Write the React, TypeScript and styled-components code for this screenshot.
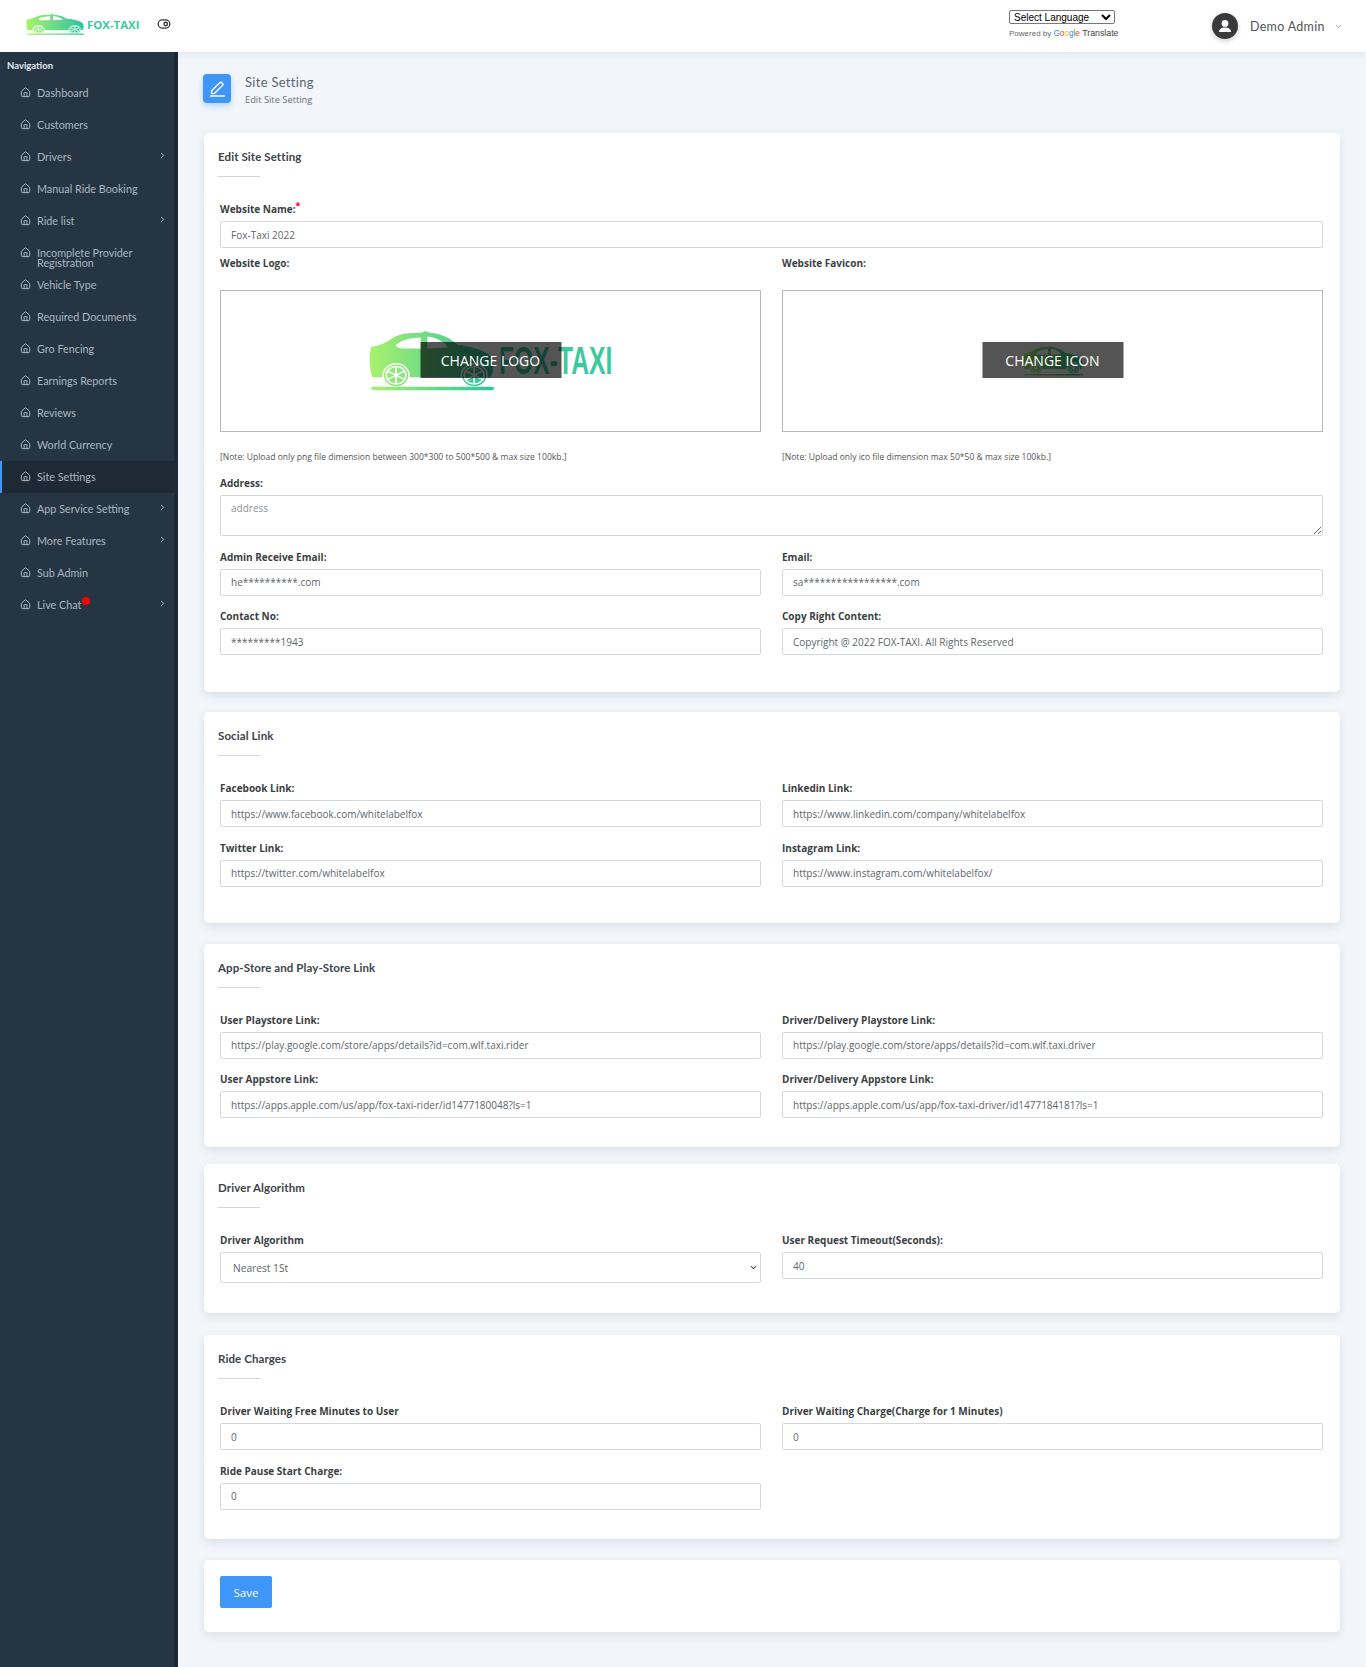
import React from 'react'
import styled, { createGlobalStyle } from 'styled-components'
import { ChevronDown, ChevronRight, House, ToggleRight } from 'lucide-react'

const GlobalStyle = createGlobalStyle`
  * { box-sizing: border-box; }
  html, body { margin: 0; padding: 0; }
  body { font-family: 'Open Sans', sans-serif; background: #f2f6fa; }
`

const NAV_ITEMS = [
  { label: 'Dashboard' },
  { label: 'Customers' },
  { label: 'Drivers', more: true },
  { label: 'Manual Ride Booking' },
  { label: 'Ride list', more: true },
  { label: 'Incomplete Provider Registration', twoLines: true },
  { label: 'Vehicle Type' },
  { label: 'Required Documents' },
  { label: 'Gro Fencing' },
  { label: 'Earnings Reports' },
  { label: 'Reviews' },
  { label: 'World Currency' },
  { label: 'Site Settings', active: true },
  { label: 'App Service Setting', more: true },
  { label: 'More Features', more: true },
  { label: 'Sub Admin' },
  { label: 'Live Chat', more: true, dot: true },
]

function Wheel({ id, cx }: { id: string; cx: number }) {
  return (
    <g>
      <circle cx={cx} cy="48" r="12.5" fill={`url(#${id})`} stroke="#fff" strokeWidth="1.5" />
      <circle cx={cx} cy="48" r="9.5" fill="none" stroke="#fff" strokeWidth="1.6" />
      <path
        d={`M${cx} 39 V57 M${cx - 8} 43.5 L${cx + 8} 52.5 M${cx - 8} 52.5 L${cx + 8} 43.5`}
        fill="none"
        stroke="#fff"
        strokeWidth="1.6"
      />
    </g>
  )
}

function CarLogo({ id, width, height }: { id: string; width: number; height: number }) {
  return (
    <svg width={width} height={height} viewBox="0 0 120 65" preserveAspectRatio="none" aria-hidden="true">
      <defs>
        <linearGradient id={id} gradientUnits="userSpaceOnUse" x1="0" y1="0" x2="120" y2="0">
          <stop offset="0" stopColor="#a9f26c" />
          <stop offset="1" stopColor="#2cc2a2" />
        </linearGradient>
      </defs>
      <path
        fill={`url(#${id})`}
        d="M2 17 C10 16 16 13 22 8 C29 3 38 2 50 2 L54 0 L58 2 C70 3 78 8 85 15 C98 17 112 21 117 28 C120 33 120 42 117 50 L3 50 C0 36 0 26 2 17 Z"
      />
      <path fill="#fff" d="M26 15 C31 10 40 7 50 7 L50 19 L32 19 C28 19 26 17 26 15 Z" />
      <path fill="#fff" d="M56 6 C65 7 71 11 76 18 L56 19 Z" />
      <Wheel id={id} cx={26} />
      <Wheel id={id} cx={101} />
      <rect x="2" y="60.5" width="118" height="3.6" rx="1.8" fill={`url(#${id})`} />
    </svg>
  )
}

function Avatar() {
  return (
    <AvatarCircle>
      <svg width="14" height="14" viewBox="0 0 14 14" aria-hidden="true">
        <circle cx="7" cy="4.4" r="3.4" fill="#fff" />
        <path d="M1 13 C1 9.6 4 8.4 7 8.4 C10 8.4 13 9.6 13 13 Z" fill="#fff" />
      </svg>
    </AvatarCircle>
  )
}

function EditIcon() {
  return (
    <svg width="15" height="16" viewBox="0 0 15 16" fill="none" stroke="#fff" strokeWidth="1.4" aria-hidden="true">
      <path d="M1.6 9.8 L9.4 2 C10.2 1.2 11.4 1.2 12.2 2 C13 2.8 13 4 12.2 4.8 L4.4 12.6 H1.6 Z" strokeLinejoin="round" />
      <path d="M0.5 15 H14.5" strokeLinecap="round" />
    </svg>
  )
}

function TextField({ label, value }: { label: string; value: string }) {
  return (
    <Field>
      <Label>{label}</Label>
      <Input readOnly defaultValue={value} />
    </Field>
  )
}

function Card(props: { title: string; bottom?: number; gap?: number; children: React.ReactNode }) {
  const { title, bottom = 24, gap = 20.5, children } = props
  return (
    <Panel $bottom={bottom} $gap={gap}>
      <PanelTitle>{title}</PanelTitle>
      <TitleRule />
      {children}
    </Panel>
  )
}

export default function App() {
  return (
    <Shell>
      <GlobalStyle />
      <Header>
        <Brand>
          <CarLogo id="brand-car" width={58} height={21} />
          <BrandName>FOX-TAXI</BrandName>
        </Brand>
        <ThemeToggle size={14} color="#333" strokeWidth={2.2} />
        <Translate>
          <LanguageSelect defaultValue="">
            <option value="">Select Language</option>
          </LanguageSelect>
          <Powered>
            Powered by <GoogleWord>
              <span style={{ color: '#4285f4' }}>G</span>
              <span style={{ color: '#ea4335' }}>o</span>
              <span style={{ color: '#fbbc05' }}>o</span>
              <span style={{ color: '#4285f4' }}>g</span>
              <span style={{ color: '#34a853' }}>l</span>
              <span style={{ color: '#ea4335' }}>e</span>
            </GoogleWord> <TranslateWord>Translate</TranslateWord>
          </Powered>
        </Translate>
        <UserMenu>
          <Avatar />
          <UserName>Demo Admin</UserName>
          <ChevronDown size={9} color="#888" strokeWidth={2} />
        </UserMenu>
      </Header>
      <Body>
        <Sidebar>
          <NavHeading>Navigation</NavHeading>
          {NAV_ITEMS.map(item => (
            <NavItem key={item.label} $active={item.active}>
              <NavIcon><House size={11} strokeWidth={2} color="#b4c0cc" /></NavIcon>
              <NavLabel $twoLines={item.twoLines}>
                {item.label}
                {item.dot && <RedDot />}
              </NavLabel>
              {item.more && <NavMore><ChevronRight size={9} strokeWidth={2.4} color="#b4c0cc" /></NavMore>}
            </NavItem>
          ))}
        </Sidebar>
        <Main>
          <PageHead>
            <PageIcon><EditIcon /></PageIcon>
            <div>
              <PageTitle>Site Setting</PageTitle>
              <PageSub>Edit Site Setting</PageSub>
            </div>
          </PageHead>

          <Card title="Edit Site Setting">
            <NameField>
              <Label>Website Name:<Required>*</Required></Label>
              <Input readOnly defaultValue="Fox-Taxi 2022" />
            </NameField>
            <Columns>
              <ImageField>
                <Label>Website Logo:</Label>
                <ImageBox>
                  <LogoPreview>
                    <CarLogo id="site-car" width={125} height={60} />
                    <LogoWord><LogoLetters>FOX-TAXI</LogoLetters></LogoWord>
                  </LogoPreview>
                  <ChangeButton>CHANGE LOGO</ChangeButton>
                </ImageBox>
                <Note>[Note: Upload only png file dimension between 300*300 to 500*500 &amp; max size 100kb.]</Note>
              </ImageField>
              <ImageField>
                <Label>Website Favicon:</Label>
                <ImageBox>
                  <LogoPreview>
                    <CarLogo id="fav-car" width={60} height={30} />
                  </LogoPreview>
                  <ChangeButton>CHANGE ICON</ChangeButton>
                </ImageBox>
                <Note>[Note: Upload only ico file dimension max 50*50 &amp; max size 100kb.]</Note>
              </ImageField>
            </Columns>
            <Field>
              <Label>Address:</Label>
              <AddressArea placeholder="address" />
            </Field>
            <Columns>
              <TextField label="Admin Receive Email:" value="he**********.com" />
              <TextField label="Email:" value="sa*****************.com" />
              <TextField label="Contact No:" value="*********1943" />
              <TextField label="Copy Right Content:" value="Copyright @ 2022 FOX-TAXI. All Rights Reserved" />
            </Columns>
          </Card>

          <Card title="Social Link">
            <Columns>
              <TextField label="Facebook Link:" value="https://www.facebook.com/whitelabelfox" />
              <TextField label="Linkedin Link:" value="https://www.linkedin.com/company/whitelabelfox" />
              <TextField label="Twitter Link:" value="https://twitter.com/whitelabelfox" />
              <TextField label="Instagram Link:" value="https://www.instagram.com/whitelabelfox/" />
            </Columns>
          </Card>

          <Card title="App-Store and Play-Store Link" bottom={16.5} gap={17}>
            <Columns>
              <TextField label="User Playstore Link:" value="https://play.google.com/store/apps/details?id=com.wlf.taxi.rider" />
              <TextField label="Driver/Delivery Playstore Link:" value="https://play.google.com/store/apps/details?id=com.wlf.taxi.driver" />
              <TextField label="User Appstore Link:" value="https://apps.apple.com/us/app/fox-taxi-rider/id1477180048?ls=1" />
              <TextField label="Driver/Delivery Appstore Link:" value="https://apps.apple.com/us/app/fox-taxi-driver/id1477184181?ls=1" />
            </Columns>
          </Card>

          <Card title="Driver Algorithm" bottom={17.5} gap={22}>
            <Columns>
              <Field>
                <Label>Driver Algorithm</Label>
                <SelectWrap>
                  <AlgorithmSelect defaultValue="nearest">
                    <option value="nearest">Nearest 1St</option>
                  </AlgorithmSelect>
                  <SelectArrow><ChevronDown size={9} strokeWidth={3} color="#555" /></SelectArrow>
                </SelectWrap>
              </Field>
              <TextField label="User Request Timeout(Seconds):" value="40" />
            </Columns>
          </Card>

          <Card title="Ride Charges" bottom={17} gap={21}>
            <Columns>
              <TextField label="Driver Waiting Free Minutes to User" value="0" />
              <TextField label="Driver Waiting Charge(Charge for 1 Minutes)" value="0" />
              <TextField label="Ride Pause Start Charge:" value="0" />
            </Columns>
          </Card>

          <SavePanel>
            <SaveButton>Save</SaveButton>
          </SavePanel>
        </Main>
      </Body>
    </Shell>
  )
}

const Shell = styled.div`
  width: 1366px;
  height: 1667px;
  overflow: hidden;
  display: flex;
  flex-direction: column;
`

const Header = styled.header`
  height: 52px;
  flex: none;
  background: #fff;
  display: flex;
  align-items: center;
  padding-left: 26px;
  position: relative;
  z-index: 2;
  box-shadow: 0 1px 6px rgba(60, 80, 110, 0.12);
  > * { flex: none; }
`

const Brand = styled.div`
  display: flex;
  align-items: center;
  gap: 3px;
  width: 131px;
  margin-bottom: 3px;
`

const BrandName = styled.span`
  font-size: 11.4px;
  font-weight: 700;
  color: #3cc9a0;
`

const ThemeToggle = styled(ToggleRight)`
  margin-bottom: 4px;
`

const Translate = styled.div`
  margin-left: 838px;
  width: 203px;
  align-self: flex-start;
  padding-top: 10px;
`

const LanguageSelect = styled.select`
  display: block;
  width: 106px;
  height: 14px;
  padding: 0;
  font: 10px 'Liberation Sans', sans-serif;
  color: #000;
  background: #fff;
  border: 1px solid #767676;
  border-radius: 2px;
`

const Powered = styled.div`
  margin-top: 4px;
  font: 8px 'Liberation Sans', sans-serif;
  color: #666;
`

const GoogleWord = styled.span`
  font-size: 8.2px;
`

const TranslateWord = styled.span`
  font-size: 8.8px;
  color: #444;
`

const UserMenu = styled.div`
  display: flex;
  align-items: center;
`

const AvatarCircle = styled.div`
  width: 26px;
  height: 26px;
  border-radius: 50%;
  background: #3a3a3c;
  display: flex;
  align-items: center;
  justify-content: center;
  box-shadow: 0 2px 5px rgba(0, 0, 0, 0.2);
  overflow: hidden;
`

const UserName = styled.span`
  margin: 0 11px 0 12px;
  width: 73px;
  white-space: nowrap;
  font: 12.5px Lato, sans-serif;
  letter-spacing: 0.3px;
  color: #555;
`

const Body = styled.div`
  flex: 1;
  display: flex;
  min-height: 0;
`

const Sidebar = styled.nav`
  width: 178px;
  flex: none;
  background: #263544;
  border-right: 4px solid #1c2935;
  padding-top: 6px;
`

const NavHeading = styled.div`
  height: 16px;
  padding-left: 7px;
  margin-bottom: 2.5px;
  font: 700 9.5px/15px Lato, sans-serif;
  color: #e2e8ee;
`

const NavItem = styled.div<{ $active?: boolean }>`
  height: 32px;
  display: flex;
  align-items: flex-start;
  padding-top: 11px;
  gap: 6px;
  position: relative;
  border-left: ${({ $active }) => ($active ? '2px solid #3f97f6' : 'none')};
  margin-right: ${({ $active }) => ($active ? '-4px' : '0')};
  padding-left: ${({ $active }) => ($active ? '18px' : '20px')};
  background-color: ${({ $active }) => ($active ? '#1d2935' : 'transparent')};
  background-image: ${({ $active }) => ($active ? 'radial-gradient(#111923 0.6px, transparent 0.7px)' : 'none')};
  background-size: 2px 2px;
`

const NavIcon = styled.span`
  display: flex;
  margin-top: -1px;
`

const NavLabel = styled.span<{ $twoLines?: boolean }>`
  font: 10.8px/10px Lato, sans-serif;
  color: #aab5c1;
  position: relative;
  max-width: ${({ $twoLines }) => ($twoLines ? '115px' : 'none')};
`

const RedDot = styled.span`
  position: absolute;
  top: -3px;
  right: -9px;
  width: 8px;
  height: 8px;
  border-radius: 50%;
  background: #f00;
`

const NavMore = styled.span`
  position: absolute;
  right: 7px;
  top: 10px;
  display: flex;
`

const Main = styled.main`
  flex: 1;
  padding: 22px 26px 0;
  min-width: 0;
`

const PageHead = styled.div`
  display: flex;
  align-items: flex-start;
  gap: 14px;
  height: 29px;
  margin: 0 0 30px -1px;
`

const PageIcon = styled.div`
  width: 28px;
  height: 29px;
  border-radius: 4px;
  background: #3d96f8;
  display: flex;
  align-items: center;
  justify-content: center;
  box-shadow: 0 3px 6px rgba(61, 150, 248, 0.35);
`

const PageTitle = styled.div`
  font: 13px/16px Lato, sans-serif;
  letter-spacing: 0.3px;
  color: #5b6570;
`

const PageSub = styled.div`
  margin-top: 3px;
  font: 9.3px/13px 'Open Sans', sans-serif;
  color: #666f78;
`

const Panel = styled.section<{ $bottom: number; $gap: number }>`
  background: #fff;
  border-radius: 5px;
  padding: 16px 17px ${({ $bottom }) => $bottom}px 16px;
  margin-bottom: ${({ $gap }) => $gap}px;
  box-shadow: 0 3px 8px rgba(70, 90, 120, 0.14);
`

const PanelTitle = styled.h3`
  margin: 0 0 0 -2px;
  font: 700 11.5px/16px Lato, sans-serif;
  letter-spacing: 0.1px;
  color: #3c444d;
`

const TitleRule = styled.div`
  width: 42px;
  height: 1px;
  margin: 11px 0 24px -2px;
  background: #d2d5d9;
`

const Columns = styled.div`
  display: grid;
  grid-template-columns: 541px 541px;
  column-gap: 21px;
`

const Field = styled.div`
  margin-bottom: 12.5px;
`

const NameField = styled(Field)`
  margin-bottom: 7px;
`

const ImageField = styled(Field)`
  margin-bottom: 11px;
`

const Label = styled.label`
  display: block;
  height: 16px;
  margin-bottom: 4px;
  font: 700 10px/16px 'Open Sans', sans-serif;
  color: #3b3f44;
`

const Required = styled.sup`
  color: #f00;
  font-size: 9px;
  line-height: 0;
`

const Input = styled.input`
  display: block;
  width: 100%;
  height: 27px;
  padding: 0 10px;
  border: 1px solid #d5d8dc;
  border-radius: 2px;
  background: #fff;
  font: 10px 'Open Sans', sans-serif;
  color: #60666c;
  outline: none;
`

const AddressArea = styled.textarea`
  display: block;
  width: 100%;
  height: 41px;
  padding: 5px 10px;
  border: 1px solid #d5d8dc;
  border-radius: 2px;
  font: 10px 'Open Sans', sans-serif;
  color: #60666c;
  &::placeholder { color: #8e9398; }
`

const SelectWrap = styled.div`
  position: relative;
`

const AlgorithmSelect = styled.select`
  display: block;
  width: 100%;
  height: 31px;
  padding: 0 12px;
  appearance: none;
  border: 1px solid #d5d8dc;
  border-radius: 2px;
  background: #fff;
  font: 10.2px 'Open Sans', sans-serif;
  color: #60666c;
`

const SelectArrow = styled.span`
  position: absolute;
  right: 3px;
  top: 11px;
  display: flex;
`

const ImageBox = styled.div`
  position: relative;
  height: 142px;
  margin-top: 19px;
  border: 1px solid #b5b8bb;
  display: flex;
  align-items: center;
  justify-content: center;
`

const LogoPreview = styled.div`
  display: flex;
  align-items: center;
  gap: 5px;
`

const LogoWord = styled.span`
  width: 113px;
  white-space: nowrap;
`

const LogoLetters = styled.span`
  display: inline-block;
  font: 700 38px/40px 'Liberation Sans', sans-serif;
  color: #3cc9a0;
  transform: scaleX(0.65);
  transform-origin: left center;
`

const ChangeButton = styled.button`
  position: absolute;
  left: 50%;
  top: calc(50% - 1px);
  width: 141px;
  height: 36px;
  transform: translate(-50%, -50%);
  border: none;
  background: rgba(0, 0, 0, 0.67);
  color: #fff;
  font: 14px 'Open Sans', sans-serif;
`

const Note = styled.div`
  margin-top: 18px;
  font: 8.55px/14px 'Open Sans', sans-serif;
  color: #555;
`

const SavePanel = styled.section`
  background: #fff;
  border-radius: 5px;
  padding: 16px;
  height: 72px;
  box-shadow: 0 3px 8px rgba(70, 90, 120, 0.14);
`

const SaveButton = styled.button`
  width: 52px;
  height: 32px;
  border: none;
  border-radius: 2px;
  background: #3d96f8;
  color: #fff;
  font: 11.5px 'Open Sans', sans-serif;
`
